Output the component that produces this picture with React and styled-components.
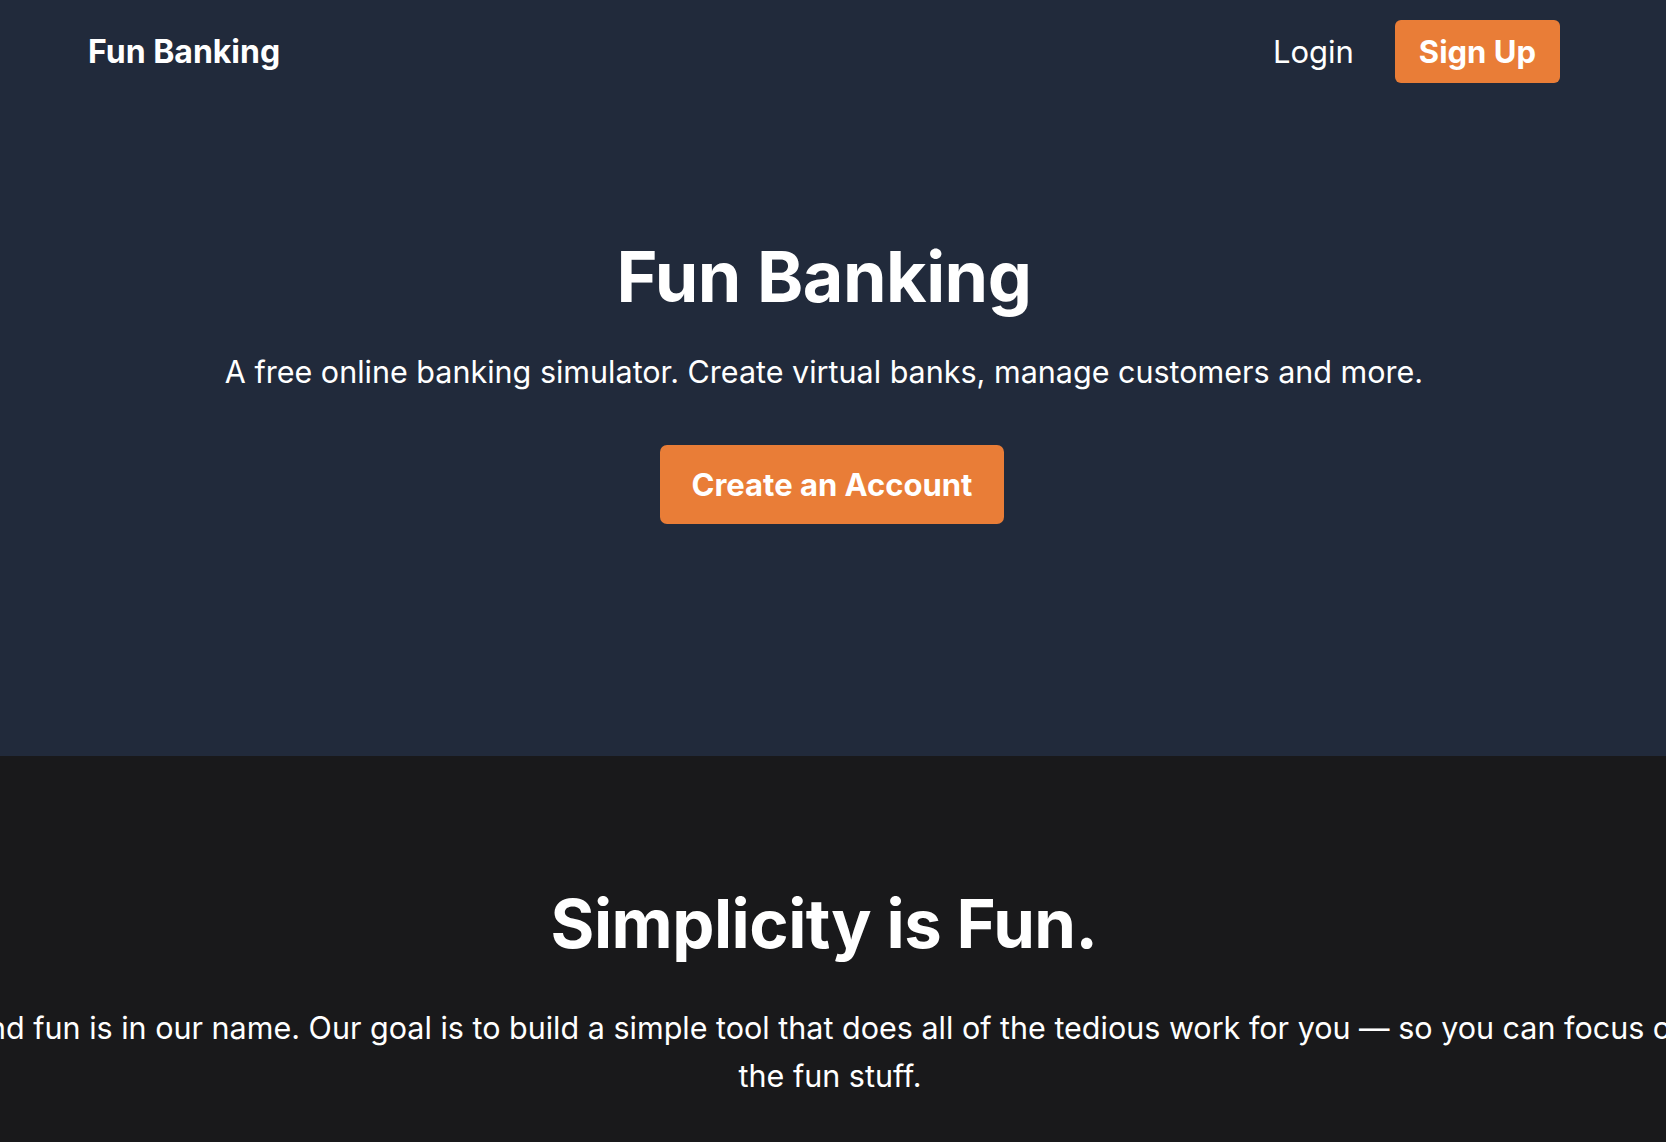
import styled, { createGlobalStyle } from "styled-components";

const GlobalStyle = createGlobalStyle`
  html, body {
    margin: 0;
    padding: 0;
    background: #19191b;
    overflow: hidden;
  }
  body {
    font-family: Inter, "Noto Sans", "Liberation Sans", sans-serif;
    color: #ffffff;
  }
`

const Page = styled.div`
  width: 1666px;
  min-height: 1142px;
  overflow: hidden;
  background: #19191b;
`

const Hero = styled.section`
  background: #212a3b;
  height: 756px;
  display: flex;
  flex-direction: column;
`

const Nav = styled.nav`
  display: flex;
  align-items: center;
  justify-content: space-between;
  padding: 20px 106px 20px 88px;
`

const Logo = styled.a`
  font-size: 32px;
  font-weight: 700;
  color: #fff;
  text-decoration: none;
`

const NavLinks = styled.div`
  display: flex;
  align-items: center;
  gap: 41px;
`

const NavLink = styled.a`
  font-size: 31px;
  font-weight: 400;
  color: #fff;
  text-decoration: none;
`

const Button = styled.a`
  display: inline-flex;
  align-items: center;
  justify-content: center;
  background: #e97d37;
  color: #fff;
  font-weight: 700;
  text-decoration: none;
  border-radius: ${(p) => (p.$big ? "7px" : "6px")};
  font-size: 31px;
  height: ${(p) => (p.$big ? "79px" : "63px")};
  padding: ${(p) => (p.$big ? "0 32px" : "0 24px")};
  box-sizing: border-box;
  margin-left: ${(p) => (p.$big ? "16px" : "0")};
`

const HeroBody = styled.div`
  display: flex;
  flex-direction: column;
  align-items: center;
  padding: 132px 18px 0 0;
  text-align: center;
`

const HeroTitle = styled.h1`
  margin: 0;
  font-size: 70px;
  font-weight: 700;
  line-height: 1.2;
  letter-spacing: -0.5px;
`

const HeroText = styled.p`
  margin: 30px 0 50px;
  font-size: 30.5px;
  line-height: 1.5;
`

const About = styled.section`
  display: flex;
  flex-direction: column;
  align-items: center;
  padding: 128px 18px 0 0;
  text-align: center;
`

const AboutTitle = styled.h2`
  margin: 0;
  font-size: 67px;
  font-weight: 700;
  line-height: 1.2;
  letter-spacing: -0.5px;
`

const AboutText = styled.p`
  flex-shrink: 0;
  white-space: nowrap;
  margin: 40px 0 0 12px;
  font-size: 30.5px;
  line-height: 48px;
`

export default function App() {
  return (
    <Page>
      <GlobalStyle />
      <Hero>
        <Nav>
          <Logo href="#">Fun Banking</Logo>
          <NavLinks>
            <NavLink href="#">Login</NavLink>
            <Button href="#">Sign Up</Button>
          </NavLinks>
        </Nav>
        <HeroBody>
          <HeroTitle>Fun Banking</HeroTitle>
          <HeroText>
            A free online banking simulator. Create virtual banks, manage customers and more.
          </HeroText>
          <Button href="#" $big>Create an Account</Button>
        </HeroBody>
      </Hero>
      <About>
        <AboutTitle>Simplicity is Fun.</AboutTitle>
        <AboutText>
          and fun is in our name. Our goal is to build a simple tool that does all of the tedious work for you — so you can focus on
          <br />
          the fun stuff.
        </AboutText>
      </About>
    </Page>
  );
}
